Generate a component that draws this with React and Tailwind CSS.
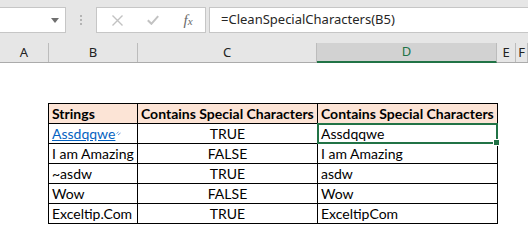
import React from "react";

const rows = [
  { b: "Assdqqwe", c: "TRUE", d: "Assdqqwe", link: true, selected: true },
  { b: "I am Amazing", c: "FALSE", d: "I am Amazing" },
  { b: "~asdw", c: "TRUE", d: "asdw" },
  { b: "Wow", c: "FALSE", d: "Wow" },
  { b: "Exceltip.Com", c: "TRUE", d: "ExceltipCom" },
];

const colHeads = [
  { label: "A", w: "w-[49px]" },
  { label: "B", w: "w-[89px]" },
  { label: "C", w: "w-[179px]" },
  { label: "D", w: "w-[180px]", active: true },
  { label: "E", w: "w-[19px]" },
  { label: "F", w: "flex-1" },
];

function FormulaBar() {
  return (
    <div className="h-[43px] bg-[#e6e6e6] flex items-start pt-[7px] font-['Noto_Sans',sans-serif]">
      {/* name box */}
      <div className="w-[66px] h-[26px] bg-white border border-l-0 border-[#c6c6c6] flex items-center justify-end pr-[6px]">
        <svg width="8" height="5" viewBox="0 0 8 5">
          <path d="M0 0h8L4 5z" fill="#6f6f6f" />
        </svg>
      </div>
      <div className="w-[30px] h-[26px] flex flex-col items-center justify-center gap-[2px]">
        <span className="w-[2px] h-[2px] bg-[#b4b4b4]" />
        <span className="w-[2px] h-[2px] bg-[#b4b4b4]" />
        <span className="w-[2px] h-[2px] bg-[#b4b4b4]" />
      </div>
      {/* cancel / enter / fx */}
      <div className="w-[110px] h-[26px] bg-white border border-[#c6c6c6] flex items-center">
        <div className="w-[38px] flex justify-center pl-[2px]">
          <svg width="11" height="11" viewBox="0 0 11 11">
            <path d="M0.5 0.5l10 10M10.5 0.5l-10 10" stroke="#c2c2c2" strokeWidth="1.4" />
          </svg>
        </div>
        <div className="w-[36px] flex justify-center">
          <svg width="12" height="10" viewBox="0 0 12 10">
            <path d="M0.8 5.2l3.6 3.6L11.2 1.2" stroke="#c2c2c2" strokeWidth="2" fill="none" />
          </svg>
        </div>
        <div className="w-[34px] flex justify-center">
          <span className="font-['Liberation_Serif',serif] italic text-[15px] leading-none text-[#6a6a6a]">
            f<span className="text-[11px]">x</span>
          </span>
        </div>
      </div>
      {/* formula input */}
      <div className="ml-[3px] flex-1 h-[26px] bg-white border border-r-0 border-[#c6c6c6] flex items-center pl-[11px] text-[13px] text-[#262626]">
        =CleanSpecialCharacters(B5)
      </div>
    </div>
  );
}

function ColumnHeaders() {
  return (
    <div className="flex h-[20px] bg-[#e6e6e6] border-b border-[#ababab] font-['Noto_Sans',sans-serif] text-[13px] text-[#222]">
      {colHeads.map((c) => (
        <div
          key={c.label}
          className={`${c.w} flex items-center justify-center border-r border-[#bcbcbc] ${
            c.active ? "bg-[#d2d2d2] text-[#217346] border-b-2 border-b-[#217346] -mb-[1px]" : ""
          }`}
        >
          {c.label}
        </div>
      ))}
    </div>
  );
}

export default function App() {
  return (
    <div className="w-[528px] h-[248px] bg-white overflow-hidden">
      <FormulaBar />
      <ColumnHeaders />
      <div className="pt-[40px] pl-[48px] font-['Lato',sans-serif] text-[14px] text-black">
        <table className="border-collapse table-fixed">
          <colgroup>
            <col className="w-[89px]" />
            <col className="w-[180px]" />
            <col className="w-[180px]" />
          </colgroup>
          <thead>
            <tr className="h-[20px] bg-[#fce4d6] font-bold whitespace-nowrap">
              <td className="border border-black px-[3px] leading-none">Strings</td>
              <td className="border border-black px-[3px] leading-none">Contains Special Characters</td>
              <td className="border border-black px-[3px] leading-none">Contains Special Characters</td>
            </tr>
          </thead>
          <tbody>
            {rows.map((r) => (
              <tr key={r.b} className="h-[20px] whitespace-nowrap">
                <td className="border border-black px-[3px] leading-none">
                  {r.link ? (
                    <span className="text-[#0563c1] underline inline-flex items-center">
                      {r.b}
                      <svg width="5" height="5" viewBox="0 0 5 5" className="ml-[1px]">
                        <path d="M0.5 2.5l2-1.5M2 4l2.5-2" stroke="#5b8fd6" strokeWidth="0.9" />
                      </svg>
                    </span>
                  ) : (
                    r.b
                  )}
                </td>
                <td className="border border-black px-[3px] leading-none text-center">{r.c}</td>
                <td className="border border-black px-[3px] leading-none relative">
                  {r.d}
                  {r.selected && (
                    <>
                      <span className="absolute -left-[1px] -top-[1px] -right-[1px] -bottom-[1px] border-2 border-[#217346]" />
                      <span className="absolute -right-[3px] -bottom-[3px] w-[5px] h-[5px] bg-[#217346] border border-white box-content" />
                    </>
                  )}
                </td>
              </tr>
            ))}
          </tbody>
        </table>
      </div>
    </div>
  );
}
